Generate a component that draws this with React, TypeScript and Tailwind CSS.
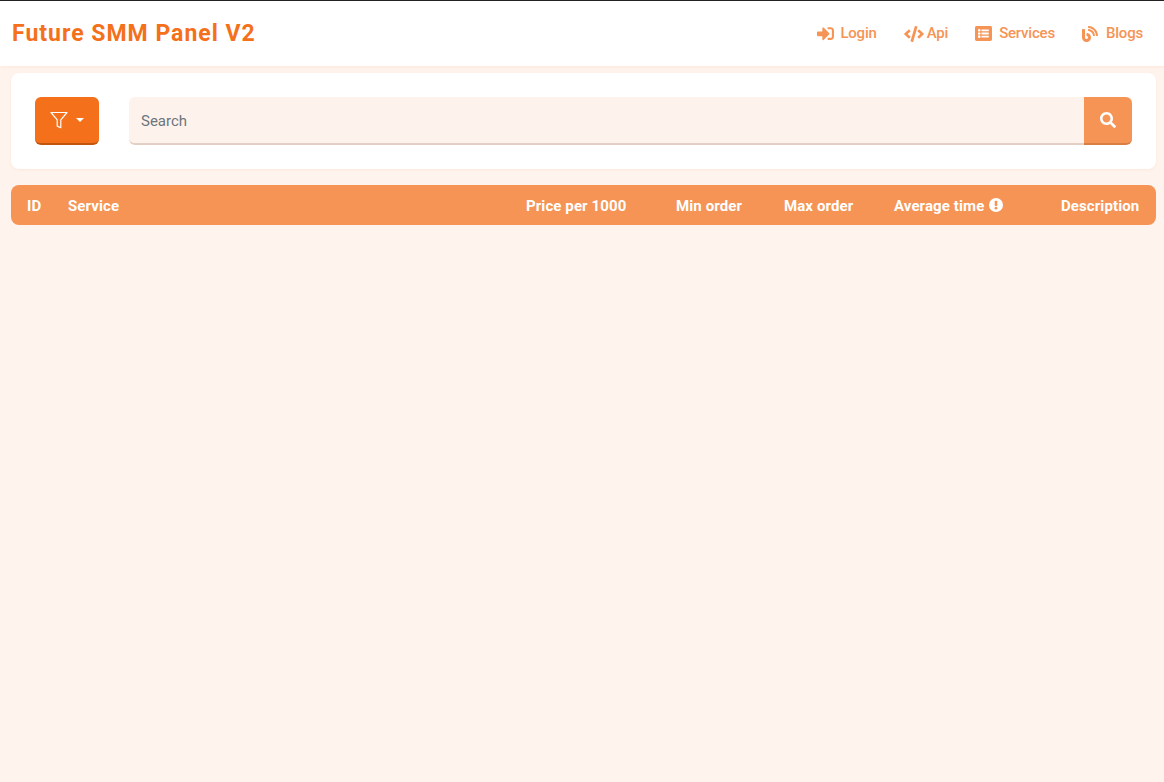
import React from "react";
import { FaSignInAlt, FaCode, FaListAlt, FaBlog, FaSearch } from "react-icons/fa";

const navItems = [
  { label: "Login", icon: FaSignInAlt, size: "text-[17px]", gap: "gap-[6px]" },
  { label: "Api", icon: FaCode, size: "text-[20px]", gap: "gap-[3px]" },
  { label: "Services", icon: FaListAlt, size: "text-[17px]", gap: "gap-[7px]" },
  { label: "Blogs", icon: FaBlog, size: "text-[16px]", gap: "gap-[8px]" },
];

const Navbar = () => (
  <nav className="h-[66px] bg-white border-t border-[#222222] shadow-[0_1px_3px_rgba(249,115,22,0.08)] flex items-center justify-between pl-3 pr-[21px]">
    <div className="text-[23px] font-bold text-[#f4701a] tracking-[1px] pt-[2px]">Future SMM Panel V2</div>
    <div className="flex items-center gap-[27px]">
      {navItems.map((item) => (
        <a key={item.label} className={`flex items-center ${item.gap} text-[15px] font-medium tracking-[-0.2px] text-[#f59455]`}>
          <item.icon className={item.size} />
          {item.label}
        </a>
      ))}
    </div>
  </nav>
);

const FilterIcon = () => (
  <svg width="18" height="18" viewBox="0 0 18 18" fill="none" stroke="#ffffff" strokeWidth="1.2" strokeLinejoin="round">
    <path d="M1 1.5h16l-6.2 7.4v7.8l-3.6-1.6V8.9z" />
  </svg>
);

const AlertIcon = () => (
  <svg width="14" height="14" viewBox="0 0 14 14" className="mb-[3px]">
    <circle cx="7" cy="7" r="7" fill="#ffffff" />
    <rect x="5.7" y="2.8" width="2.6" height="5.2" rx="0.8" fill="#f59455" />
    <circle cx="7" cy="10.2" r="1.4" fill="#f59455" />
  </svg>
);

const SearchCard = () => (
  <div className="mt-[7px] ml-[11px] mr-2 h-[96px] bg-white rounded-lg shadow-[0_1px_3px_rgba(249,115,22,0.08)] flex items-center px-6">
    <button className="w-16 h-12 rounded-md bg-[#f4701a] border-b-2 border-[#c2560c] flex items-center justify-center gap-[8px] pr-[1px]">
      <FilterIcon />
      <span className="w-0 h-0 border-x-[4px] border-x-transparent border-t-[4px] border-t-white" />
    </button>
    <div className="ml-[30px] flex-1 h-12 flex">
      <input
        placeholder="Search"
        className="flex-1 h-12 bg-[#fef3ec] rounded-l-md border-b-2 border-[#e3cfc3] px-3 pt-[2px] text-[15px] text-[#6b7280] placeholder:text-[#6c757d] outline-none"
      />
      <button className="w-12 h-12 bg-[#f59455] rounded-r-md border-b-2 border-[#d97f45] flex items-center justify-center">
        <FaSearch className="text-white text-[16px]" />
      </button>
    </div>
  </div>
);

const TableHeader = () => (
  <div className="mt-4 ml-[11px] mr-2 h-10 bg-[#f59455] rounded-lg pl-4 pt-[2px] grid grid-cols-[41px_458px_150px_108px_110px_167px_79px] items-center text-[15px] font-bold tracking-[0.1px] text-white whitespace-nowrap">
    <div>ID</div>
    <div>Service</div>
    <div>Price per 1000</div>
    <div>Min order</div>
    <div>Max order</div>
    <div className="flex items-center gap-[5px]">
      Average time
      <AlertIcon />
    </div>
    <div>Description</div>
  </div>
);

export default function App() {
  return (
    <div className="min-h-[782px] bg-[#fef3ed] font-['Roboto',sans-serif]">
      <Navbar />
      <SearchCard />
      <TableHeader />
    </div>
  );
}
